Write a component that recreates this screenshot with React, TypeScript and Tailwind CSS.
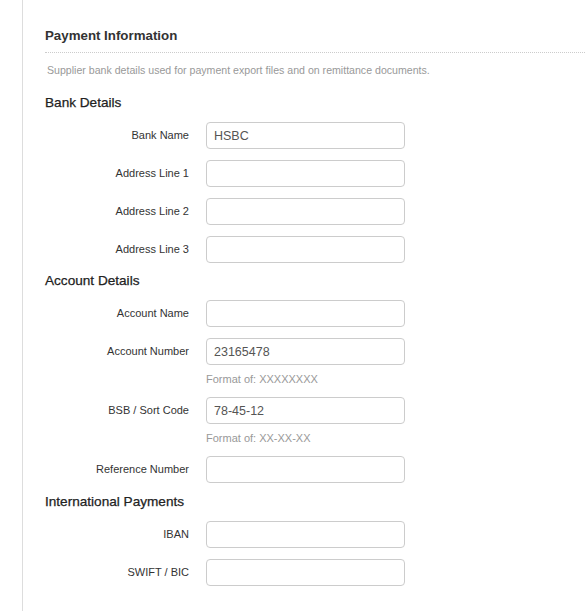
import type { ReactNode } from 'react';

interface FieldDef {
  label: string;
  value?: string;
  hint?: string;
}

const bankFields: FieldDef[] = [
  { label: 'Bank Name', value: 'HSBC' },
  { label: 'Address Line 1' },
  { label: 'Address Line 2' },
  { label: 'Address Line 3' },
];

const accountFields: FieldDef[] = [
  { label: 'Account Name' },
  { label: 'Account Number', value: '23165478', hint: 'Format of: XXXXXXXX' },
  { label: 'BSB / Sort Code', value: '78-45-12', hint: 'Format of: XX-XX-XX' },
  { label: 'Reference Number' },
];

const internationalFields: FieldDef[] = [{ label: 'IBAN' }, { label: 'SWIFT / BIC' }];

function SectionHeading({ children, className = '' }: { children: ReactNode; className?: string }) {
  return (
    <h3
      className={`${className} mb-[9px] h-[20px] leading-[20px] text-[13.6px] text-[#222] [-webkit-text-stroke:0.25px_#222]`}
    >
      {children}
    </h3>
  );
}

function Field({ field, first }: { field: FieldDef; first: boolean }) {
  return (
    <div className={first ? '' : 'mt-[11px]'}>
      <div className="flex items-center">
        <label className="w-[144px] shrink-0 text-right text-[11px] text-[#333]">{field.label}</label>
        <input
          defaultValue={field.value}
          className="ml-[17px] h-[27px] w-[199px] rounded-[4px] border border-[#ccc] bg-white px-[7px] text-[12.5px] text-[#555] outline-none"
        />
      </div>
      {field.hint && (
        <p className="ml-[161px] mt-[7px] h-[14px] leading-[14px] text-[11px] text-[#999]">{field.hint}</p>
      )}
    </div>
  );
}

function FieldGroup({ fields }: { fields: FieldDef[] }) {
  return (
    <div>
      {fields.map((f, i) => (
        <Field key={f.label} field={f} first={i === 0} />
      ))}
    </div>
  );
}

export default function App() {
  return (
    <div
      className="min-h-[611px] bg-white pl-[22px]"
      style={{ fontFamily: '"Liberation Sans", Arial, sans-serif' }}
    >
      <div className="min-h-[611px] border-l border-[#ddd] pl-[22px] pt-[27px]">
        <h2 className="h-[18px] leading-[18px] text-[13.3px] font-bold text-[#333]">Payment Information</h2>
        <div className="mt-[7px] border-b border-dotted border-[#ccc]" />
        <p className="mt-[10px] h-[14px] leading-[14px] pl-[2px] text-[10.6px] text-[#999]">
          Supplier bank details used for payment export files and on remittance documents.
        </p>
        <div className="mt-[16px]">
          <SectionHeading className="mt-0">Bank Details</SectionHeading>
          <FieldGroup fields={bankFields} />
          <SectionHeading className="mt-[8px]">Account Details</SectionHeading>
          <FieldGroup fields={accountFields} />
          <SectionHeading className="mt-[9px]">International Payments</SectionHeading>
          <FieldGroup fields={internationalFields} />
        </div>
      </div>
    </div>
  );
}
